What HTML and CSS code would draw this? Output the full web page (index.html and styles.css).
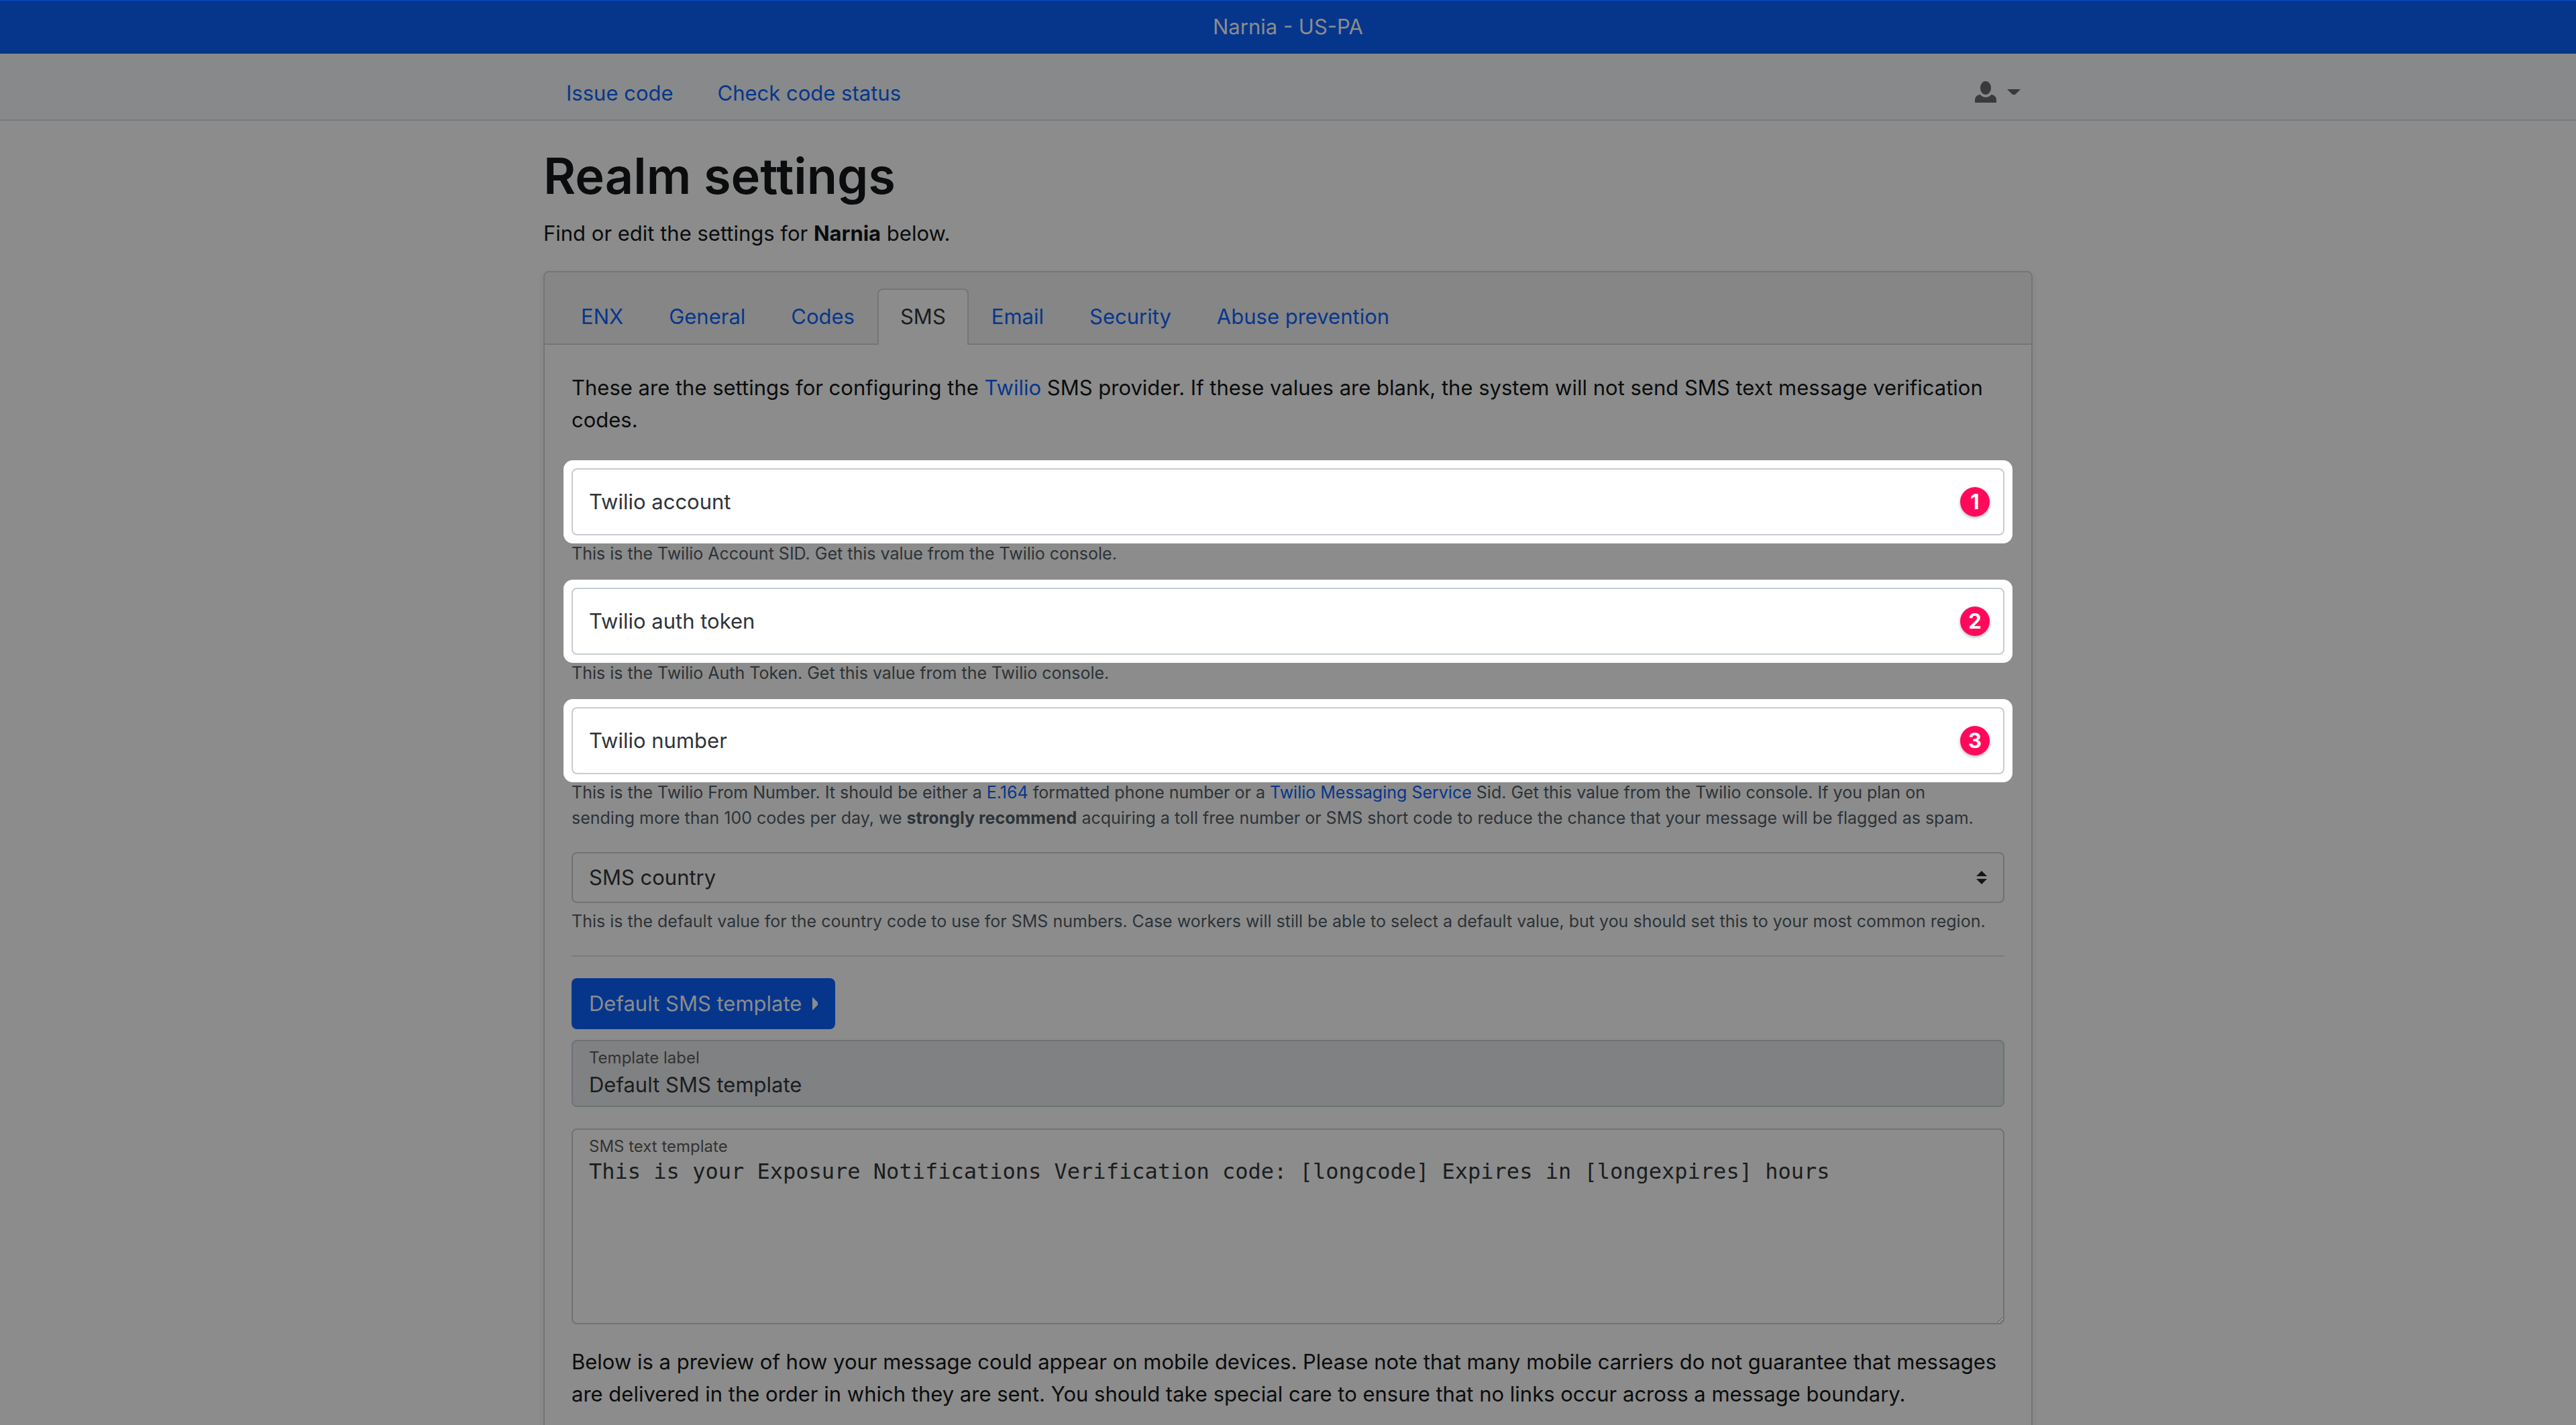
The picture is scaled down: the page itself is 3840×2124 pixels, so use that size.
FILE: index.html
```html
<!DOCTYPE html>
<html lang="en">
<head>
  <meta charset="utf-8">
  <meta name="viewport" content="width=device-width, initial-scale=1">
  <title>Realm settings</title>
  <link rel="stylesheet" href="styles.css">
</head>
<body>
  <div class="realm-bar">Narnia - US-PA</div>

  <header class="navbar">
    <nav class="container navbar-inner" aria-label="Main">
      <a class="nav-item" href="#issue">Issue code</a>
      <a class="nav-item" href="#status">Check code status</a>
      <button class="user-menu" type="button" aria-label="Account menu">
        <svg class="icon-person" viewBox="0 0 8 8" aria-hidden="true"><path d="M4 0c-1.1 0-2 1.12-2 2.5s.9 2.5 2 2.5 2-1.12 2-2.5-.9-2.5-2-2.5zm-2.09 5c-1.06.05-1.91.92-1.91 2v1h8v-1c0-1.08-.84-1.95-1.91-2-.54.61-1.28 1-2.09 1-.81 0-1.55-.39-2.09-1z"/></svg>
        <svg class="icon-caret" viewBox="0 0 20 8" aria-hidden="true"><path d="M0 0h20l-8 8h-4z"/></svg>
      </button>
    </nav>
  </header>

  <main class="container">
    <h1 class="title">Realm settings</h1>
    <p class="lead">Find or edit the settings for <strong>Narnia</strong> below.</p>

    <section class="card">
      <nav class="tabs" aria-label="Settings">
        <a class="tab" href="#enx">ENX</a>
        <a class="tab" href="#general">General</a>
        <a class="tab" href="#codes">Codes</a>
        <a class="tab tab-active" href="#sms" aria-current="page">SMS</a>
        <a class="tab" href="#email">Email</a>
        <a class="tab" href="#security">Security</a>
        <a class="tab" href="#abuse">Abuse prevention</a>
      </nav>

      <form class="card-body">
        <p class="intro">These are the settings for configuring the <a href="#twilio">Twilio</a> SMS provider. If these values are blank, the system will not send SMS text message verification codes.</p>

        <div class="field">
          <div class="control control-highlight">
            <input class="input" id="account" type="text">
            <label class="label" for="account">Twilio account</label>
            <span class="badge">1</span>
          </div>
          <small class="help">This is the Twilio Account SID. Get this value from the Twilio console.</small>
        </div>

        <div class="field">
          <div class="control control-highlight">
            <input class="input" id="token" type="password">
            <label class="label" for="token">Twilio auth token</label>
            <span class="badge">2</span>
          </div>
          <small class="help">This is the Twilio Auth Token. Get this value from the Twilio console.</small>
        </div>

        <div class="field">
          <div class="control control-highlight">
            <input class="input" id="number" type="tel">
            <label class="label" for="number">Twilio number</label>
            <span class="badge">3</span>
          </div>
          <small class="help">This is the Twilio From Number. It should be either a <a href="#e164">E.164</a> formatted phone number or a <a href="#service">Twilio Messaging Service</a> Sid. Get this value from the Twilio console. If you plan on<br>sending more than 100 codes per day, we <strong>strongly recommend</strong> acquiring a toll free number or SMS short code to reduce the chance that your message will be flagged as spam.</small>
        </div>

        <div class="field">
          <div class="control">
            <select class="select" aria-label="SMS country">
              <option>SMS country</option>
            </select>
            <svg class="select-arrows" viewBox="0 0 16 20" aria-hidden="true"><path d="M0 8l8-8 8 8zM0 12h16l-8 8z"/></svg>
          </div>
          <small class="help">This is the default value for the country code to use for SMS numbers. Case workers will still be able to select a default value, but you should set this to your most common region.</small>
        </div>

        <hr class="divider">

        <button class="button" type="button">
          Default SMS template
          <svg class="icon-right" viewBox="0 0 8 20" aria-hidden="true"><path d="M0 0l8 8v4l-8 8z"/></svg>
        </button>

        <div class="field">
          <div class="control">
            <input class="input input-filled" id="template-label" type="text" value="Default SMS template" readonly>
            <label class="label label-small" for="template-label">Template label</label>
          </div>
        </div>

        <div class="field">
          <div class="control">
            <textarea class="input textarea" id="template-text" spellcheck="false">This is your Exposure Notifications Verification code: [longcode] Expires in [longexpires] hours</textarea>
            <label class="label label-small" for="template-text">SMS text template</label>
          </div>
        </div>

        <p class="preview">Below is a preview of how your message could appear on mobile devices. Please note that many mobile carriers do not guarantee that messages are delivered in the order in which they are sent. You should take special care to ensure that no links occur across a message boundary.</p>
      </form>
    </section>
  </main>
</body>
</html>
```
FILE: styles.css
```css
:root {
  --page: #8c8c8c;
  --text: #0a0c0d;
  --muted: #2c3338;
  --value: #1a1d20;
  --blue: #06368c;
  --line: #757575;
  --field-line: #6e7377;
}

* {
  box-sizing: border-box;
}

body {
  margin: 0;
  height: 100vh;
  overflow: hidden;
  background: var(--page);
  color: var(--text);
  font: 400 31px/48px Inter, "Liberation Sans", sans-serif;
}

a {
  color: var(--blue);
  text-decoration: none;
}

p {
  margin: 0;
}

strong {
  font-weight: 700;
}

.container {
  width: 100%;
  max-width: 2220px;
  margin: 0 auto;
}

.realm-bar {
  padding: 15px 0 16px;
  border-top: 1px solid #0a50cc;
  background: var(--blue);
  color: var(--page);
  text-align: center;
}

.navbar {
  padding: 35px 0 15px;
  border-bottom: 2px solid #797b7d;
  background: #88898a;
}

.navbar-inner {
  display: flex;
  align-items: center;
  gap: 66px;
  padding: 0 16px 0 34px;
}

.user-menu {
  display: flex;
  align-items: center;
  gap: 16px;
  margin: 0 0 4px auto;
  padding: 0 2px 0 0;
  border: 0;
  background: none;
  fill: #3a3a3a;
}

.icon-person {
  width: 32px;
  height: 32px;
}

.icon-caret {
  width: 20px;
  height: 8px;
}

.title {
  margin: 34px 0 14px;
  font-size: 74px;
  font-weight: 600;
  line-height: 96px;
}

.lead {
  margin-bottom: 32px;
}

.card {
  border: 2px solid var(--line);
  border-radius: 8px;
  box-shadow: 0 4px 8px rgba(0, 0, 0, 0.08);
}

.tabs {
  display: flex;
  height: 108px;
  padding: 24px 20px 0;
  border-bottom: 2px solid var(--line);
  border-radius: 6px 6px 0 0;
  background: #868686;
}

.tab {
  height: 84px;
  padding: 16px 32px;
  border: 2px solid transparent;
  border-bottom: 0;
  border-radius: 8px 8px 0 0;
}

.tab-active {
  border-color: var(--line);
  background: var(--page);
  color: var(--value);
}

.card-body {
  padding: 40px;
}

.intro {
  margin-bottom: 48px;
}

.field {
  margin-bottom: 32px;
}

/* The input, its label and its marker share one grid cell. */
.control {
  display: grid;
  align-items: center;
}

.control > * {
  grid-area: 1 / 1;
}

.control-highlight {
  margin: -12px;
  padding: 12px;
  border-radius: 14px;
  background: #fff;
}

.input,
.select {
  width: 100%;
  margin: 0;
  border: 2px solid var(--field-line);
  border-radius: 8px;
  background: transparent;
  color: var(--value);
  font: inherit;
}

.input {
  height: 100px;
  padding: 40px 24px 8px;
}

.input-filled {
  background: #808182;
}

.control-highlight .input {
  border-color: #c6ccd2;
}

.textarea {
  display: block;
  height: 292px;
  padding-top: 38px;
  font-family: "DejaVu Sans Mono", monospace;
  font-size: 32px;
}

.select {
  height: 76px;
  padding: 0 24px;
  appearance: none;
}

.select-arrows {
  justify-self: end;
  width: 16px;
  height: 20px;
  margin-right: 26px;
  fill: #121619;
  pointer-events: none;
}

.label {
  justify-self: start;
  margin-left: 26px;
  color: #2f343a;
}

.label-small {
  align-self: start;
  margin-top: 9px;
  color: #333;
  font-size: 24px;
  line-height: 36px;
}

.badge {
  justify-self: end;
  width: 44px;
  height: 44px;
  margin-right: 22px;
  border-radius: 50%;
  background: #ff0a5b;
  box-shadow: 0 2px 4px rgba(0, 0, 0, 0.3);
  color: #fff;
  font-weight: 700;
  line-height: 44px;
  text-align: center;
}

.help {
  display: block;
  position: relative;
  margin-top: 8px;
  color: var(--muted);
  font-size: 25px;
  line-height: 38px;
}

.divider {
  margin: 0 0 32px;
  border: 0;
  border-top: 2px solid #7c7c7c;
}

.button {
  display: flex;
  align-items: center;
  gap: 16px;
  height: 76px;
  margin-bottom: 16px;
  padding: 0 26px;
  border: 0;
  border-radius: 8px;
  background: var(--blue);
  color: var(--page);
  font: inherit;
}

.icon-right {
  width: 8px;
  height: 20px;
  fill: currentColor;
}
```
